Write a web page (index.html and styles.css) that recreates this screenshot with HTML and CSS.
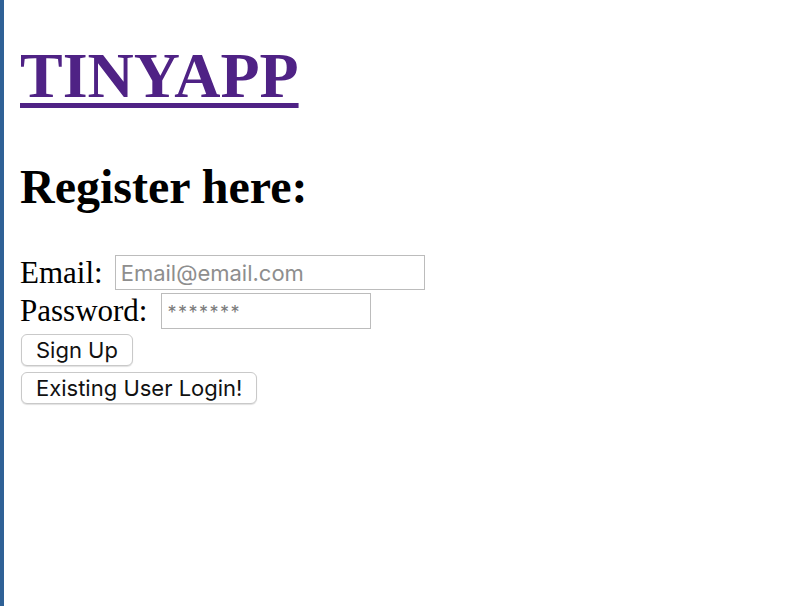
FILE: index.html
```html
<!DOCTYPE html>
<html>
<head>
<meta charset="utf-8">
<title>TinyApp</title>
<link rel="stylesheet" href="styles.css">
</head>
<body>
<div class="page">
  <h1 class="brand"><a href="#" class="brand-link">TINYAPP</a></h1>
  <h2 class="title">Register here:</h2>
  <form class="form">
    <div class="row">
      <label class="label" for="email">Email:</label>
      <input class="field field-email" id="email" type="email" placeholder="Email@email.com">
    </div>
    <div class="row row-pass">
      <label class="label label-pass" for="password">Password:</label>
      <input class="field field-pass" id="password" type="password" placeholder="*******">
    </div>
    <div class="row row-btn">
      <button class="btn" type="button">Sign Up</button>
    </div>
    <div class="row row-btn2">
      <button class="btn" type="button">Existing User Login!</button>
    </div>
  </form>
</div>
</body>
</html>
```
FILE: styles.css
```css
html, body {
  margin: 0;
  padding: 0;
  background: #ffffff;
}
.page {
  border-left: 4px solid #2f6196;
  min-height: 606px;
  box-sizing: border-box;
  padding: 1px 16px 0 16px;
  font-family: "Liberation Serif", "Times New Roman", serif;
  font-size: 31px;
  color: #000;
}
.brand {
  font-size: 64px;
  font-weight: bold;
  margin: 39px 0 0 0;
  line-height: 72px;
}
.brand-link {
  color: #4f2285;
  text-decoration: underline;
  text-decoration-thickness: 5px;
  text-underline-offset: 6px;
}
.title {
  font-size: 48px;
  font-weight: bold;
  margin: 47px 0 0 0;
  line-height: 55px;
}
.form {
  margin-top: 41px;
}
.row {
  display: flex;
  align-items: center;
  height: 35px;
}
.row-pass {
  margin-top: 3px;
  height: 36px;
}
.row-btn {
  margin-top: 4px;
  height: 33px;
}
.row-btn2 {
  margin-top: 5px;
  height: 33px;
}
.label {
  line-height: 34px;
  margin-right: 12px;
}
.label-pass {
  margin-right: 14px;
}
.field {
  box-sizing: border-box;
  height: 35px;
  border: 1px solid #bcbcbc;
  padding: 0 5px;
  font-family: Inter, "Noto Sans", sans-serif;
  font-size: 22px;
  color: #000;
  outline: none;
}
.field::placeholder {
  color: #8e8e8e;
}
.field-email {
  width: 310px;
}
.field-pass {
  width: 210px;
  height: 36px;
}
.field-pass::placeholder {
  font-size: 18px;
  letter-spacing: 1.5px;
  color: #7a7a7a;
}
.btn {
  box-sizing: border-box;
  margin-left: 1px;
  height: 32px;
  padding: 0 14px;
  background: #ffffff;
  border: 1px solid #c9c9c9;
  border-radius: 6px;
  box-shadow: 0 1px 1px rgba(0,0,0,0.12);
  font-family: Inter, "Noto Sans", sans-serif;
  font-size: 22px;
  color: #111;
  line-height: 30px;
}
```
